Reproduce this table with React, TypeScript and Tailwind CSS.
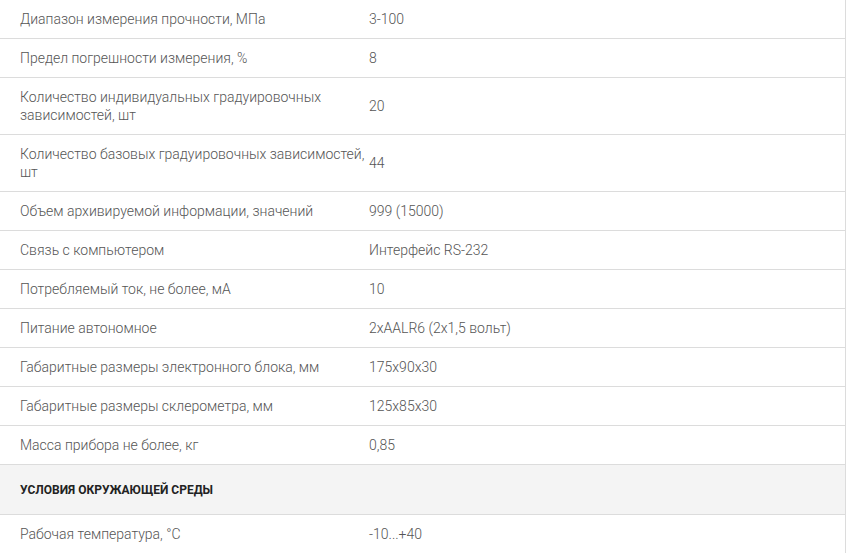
import React from 'react';

const SPECS: [string, string][] = [
  ['Диапазон измерения прочности, МПа', '3-100'],
  ['Предел погрешности измерения, %', '8'],
  ['Количество индивидуальных градуировочных зависимостей, шт', '20'],
  ['Количество базовых градуировочных зависимостей, шт', '44'],
  ['Объем архивируемой информации, значений', '999 (15000)'],
  ['Связь с компьютером', 'Интерфейс RS-232'],
  ['Потребляемый ток, не более, мА', '10'],
  ['Питание автономное', '2xAALR6 (2x1,5 вольт)'],
  ['Габаритные размеры электронного блока, мм', '175x90x30'],
  ['Габаритные размеры склерометра, мм', '125x85x30'],
  ['Масса прибора не более, кг', '0,85'],
];

const Row: React.FC<{ name: string; value: string }> = ({ name, value }) => (
  <div className="grid grid-cols-[369px_1fr] items-center border-b border-[#dcdcdc] py-[10px] text-[14px] leading-[18px] font-light text-[#555]">
    <div className="pl-5 pr-[4px]">{name}</div>
    <div>{value}</div>
  </div>
);

const App: React.FC = () => {
  return (
    <div className="min-h-[553px] w-[846px] bg-white font-['Roboto',sans-serif]">
      <div className="border-r border-[#dcdcdc]">
        {SPECS.map(([name, value]) => (
          <Row key={name} name={name} value={value} />
        ))}
        <div className="flex h-[50px] items-center border-b border-[#dcdcdc] bg-[#f4f4f4] pl-5 text-[12px] font-bold uppercase text-[#222]">
          Условия окружающей среды
        </div>
        <Row name="Рабочая температура, °С" value="-10...+40" />
      </div>
    </div>
  );
};

export default App;
